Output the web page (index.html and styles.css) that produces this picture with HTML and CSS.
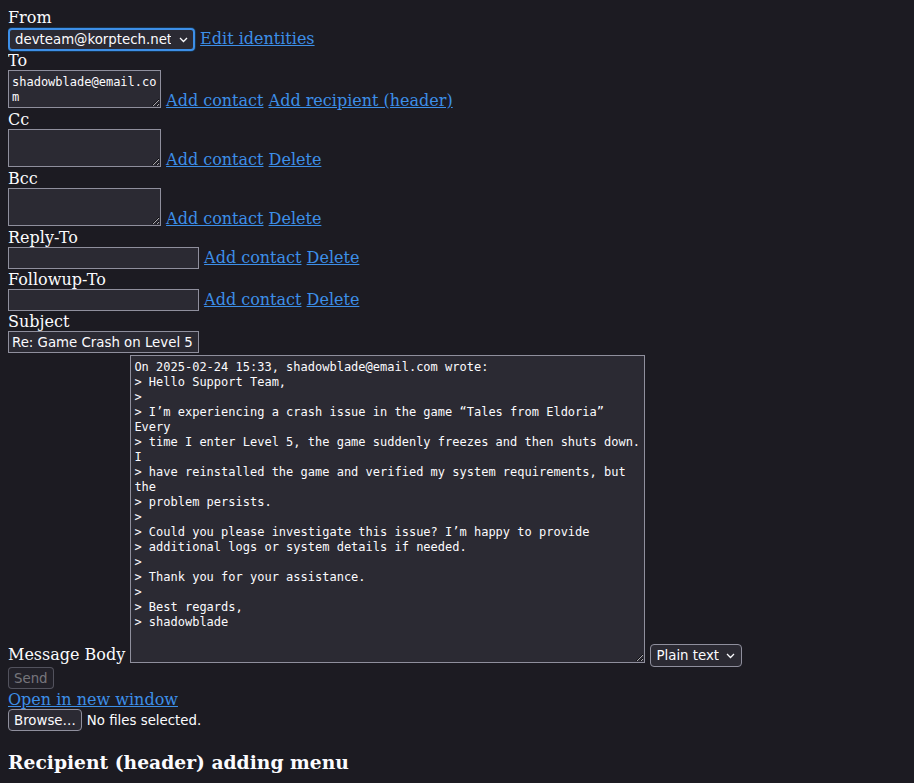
FILE: index.html
```html
<!DOCTYPE html>
<html lang="en">
<head>
  <meta charset="UTF-8" />
  <title>Compose</title>
  <link rel="stylesheet" href="styles.css">
</head>
<body>

<form class="compose">
  <!-- From -->
  <div class="label">From</div>
  <div class="row from-row">
    <span class="select-wrap focus">
      <select class="select wide">
        <option>devteam@korptech.net</option>
      </select>
      <svg class="chev" width="9" height="6" viewBox="0 0 9 6"><path d="M1 1l3.5 3.5L8 1" fill="none" stroke="#fbfbfe" stroke-width="1.3"/></svg>
    </span>
    <a href="#">Edit identities</a>
  </div>

  <!-- Recipients -->
  <div class="label">To</div>
  <div class="row">
    <textarea class="area small">shadowblade@email.com</textarea>
    <a href="#">Add contact</a>
    <a href="#">Add recipient (header)</a>
  </div>

  <div class="label">Cc</div>
  <div class="row">
    <textarea class="area small"></textarea>
    <a href="#">Add contact</a>
    <a href="#">Delete</a>
  </div>

  <div class="label">Bcc</div>
  <div class="row">
    <textarea class="area small"></textarea>
    <a href="#">Add contact</a>
    <a href="#">Delete</a>
  </div>

  <div class="label">Reply-To</div>
  <div class="row">
    <input type="text" class="text-in">
    <a href="#">Add contact</a>
    <a href="#">Delete</a>
  </div>

  <div class="label">Followup-To</div>
  <div class="row">
    <input type="text" class="text-in">
    <a href="#">Add contact</a>
    <a href="#">Delete</a>
  </div>

  <div class="label">Subject</div>
  <div class="row subject-row">
    <input type="text" class="text-in" value="Re: Game Crash on Level 5">
  </div>

  <!-- Body -->
  <div class="row">
    <span>Message Body</span>
    <textarea class="area body">On 2025-02-24 15:33, shadowblade@email.com wrote:
&gt; Hello Support Team,
&gt;
&gt; I’m experiencing a crash issue in the game “Tales from Eldoria” Every
&gt; time I enter Level 5, the game suddenly freezes and then shuts down. I
&gt; have reinstalled the game and verified my system requirements, but the
&gt; problem persists.
&gt;
&gt; Could you please investigate this issue? I’m happy to provide
&gt; additional logs or system details if needed.
&gt;
&gt; Thank you for your assistance.
&gt;
&gt; Best regards,
&gt; shadowblade</textarea>
    <span class="select-wrap">
      <select class="select format">
        <option>Plain text</option>
      </select>
      <svg class="chev" width="9" height="6" viewBox="0 0 9 6"><path d="M1 1l3.5 3.5L8 1" fill="none" stroke="#fbfbfe" stroke-width="1.3"/></svg>
    </span>
  </div>

  <div class="row">
    <button type="button" class="btn" disabled>Send</button>
  </div>
  <div class="row open-row">
    <a href="#">Open in new window</a>
  </div>
  <div class="row">
    <button type="button" class="btn">Browse…</button><span class="file-note">No files selected.</span>
  </div>
</form>

<h3>Recipient (header) adding menu</h3>

</body>
</html>
```

FILE: styles.css
```css
body {
  margin: 8px;
  background: #1c1b22;
  color: #fbfbfe;
  font-family: "DejaVu Serif", serif;
  font-size: 16px;
  line-height: 19px;
  color-scheme: dark;
}
a { color: #3d8fe8; }

.label { display: block; }

.row { display: block; }
.from-row { padding-top: 1px; }
.subject-row { padding-bottom: 1px; }
.open-row { padding-top: 1px; }

/* form fields */
.area, .text-in, .select, .btn {
  box-sizing: border-box;
  background: #2b2a33;
  color: #fbfbfe;
  border: 1px solid #8f8f9d;
  margin: 0;
}
.area {
  font-family: "DejaVu Sans Mono", monospace;
  font-size: 12px;
  line-height: 15px;
  padding: 4px 3px 2px;
  border-radius: 0;
  vertical-align: -2px;
}
.area.small { width: 153px; height: 38px; }
.area.body { width: 515px; height: 308px; vertical-align: -3px; }

.text-in {
  font-family: "DejaVu Sans", sans-serif;
  font-size: 13.33px;
  line-height: 16px;
  width: 191px;
  height: 22px;
  padding: 2px 3px;
  border-radius: 0;
  margin-bottom: 1px;
}

.select-wrap { position: relative; display: inline-block; }
.select {
  appearance: none;
  font-family: "DejaVu Sans", sans-serif;
  font-size: 13.33px;
  height: 23px;
  padding: 0 22px 0 5px;
  border-radius: 4px;
}
.select.wide { width: 187px; }
.select.format { width: 92px; }
.chev {
  position: absolute;
  right: 7px; top: 9px;
  pointer-events: none;
}
.focus .select {
  border: 2px solid #3d8fe8;
  padding-left: 5px;
  box-shadow: 0 0 0 1px #17344f;
}

.btn {
  font-family: "DejaVu Sans", sans-serif;
  font-size: 13.33px;
  height: 22px;
  padding: 0 5px;
  border-radius: 4px;
}
.btn:disabled {
  color: rgba(251, 251, 254, 0.4);
  border-color: rgba(143, 143, 157, 0.45);
  background: rgba(43, 42, 51, 0.45);
}
.file-note {
  font-family: "DejaVu Sans", sans-serif;
  font-size: 13.33px;
  margin-left: 5px;
}

h3 {
  font-size: 18.72px;
  line-height: 22px;
  margin: 20px 0 18px;
}
```
